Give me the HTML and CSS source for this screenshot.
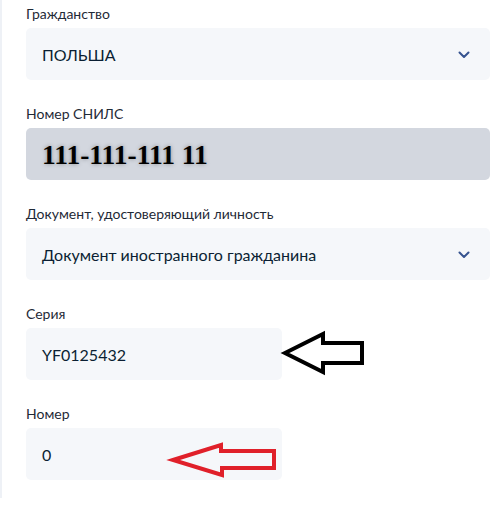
FILE: index.html
```html
<!DOCTYPE html>
<html lang="ru">
<head>
<meta charset="utf-8">
<title>Форма</title>
<link rel="stylesheet" href="styles.css">
</head>
<body>
<div class="page">
  <div class="form">
    <div class="field">
      <div class="label">Гражданство</div>
      <div class="box select">
        <span class="value">ПОЛЬША</span>
        <svg class="chev" width="12" height="8" viewBox="0 0 12 8"><path d="M1.5 1.5 L6 6 L10.5 1.5" fill="none" stroke="#36538f" stroke-width="2" stroke-linecap="round" stroke-linejoin="round"/></svg>
      </div>
    </div>
    <div class="field">
      <div class="label">Номер СНИЛС</div>
      <div class="box snils"><span class="snils-value">111-111-111 11</span></div>
    </div>
    <div class="field">
      <div class="label">Документ, удостоверяющий личность</div>
      <div class="box select">
        <span class="value">Документ иностранного гражданина</span>
        <svg class="chev" width="12" height="8" viewBox="0 0 12 8"><path d="M1.5 1.5 L6 6 L10.5 1.5" fill="none" stroke="#36538f" stroke-width="2" stroke-linecap="round" stroke-linejoin="round"/></svg>
      </div>
    </div>
    <div class="field">
      <div class="label">Серия</div>
      <div class="box short"><span class="value">YF0125432</span></div>
    </div>
    <div class="field">
      <div class="label">Номер</div>
      <div class="box short"><span class="value">0</span></div>
    </div>
  </div>
  <svg class="marks" width="492" height="518" viewBox="0 0 492 518">
    <polygon points="285,353 323,334 323,343 362,343 362,363 323,363 323,372" fill="none" stroke="#000" stroke-width="4" stroke-linejoin="miter"/>
    <polygon points="173,460 221,445 221,451 274,451 274,468 222,468 222,475" fill="none" stroke="#e0202a" stroke-width="4" stroke-linejoin="miter"/>
  </svg>
</div>
</body>
</html>
```

FILE: styles.css
```css
html, body {
  margin: 0;
  padding: 0;
  background: #ffffff;
}
body {
  font-family: Lato, "Noto Sans", sans-serif;
  color: #0b1f33;
}
.page {
  position: relative;
  width: 492px;
  height: 518px;
}
.form {
  box-sizing: border-box;
  width: 492px;
  height: 498px;
  border-left: 2px solid #eef1f6;
  padding: 4px 2px 0 24px;
  display: flex;
  flex-direction: column;
  gap: 24px;
}
.field {
  display: flex;
  flex-direction: column;
  gap: 4px;
}
.label {
  font-size: 14px;
  line-height: 20px;
  color: #1f2a37;
}
.box {
  box-sizing: border-box;
  height: 52px;
  border-radius: 5px;
  background: #f5f7fa;
  display: flex;
  align-items: center;
  padding: 2px 16px 0 16px;
}
.value {
  font-size: 16px;
  line-height: 20px;
  color: #0b1f33;
}
.select {
  justify-content: space-between;
  padding-right: 20px;
}
.chev {
  display: block;
}
.snils {
  background: #d3d7df;
}
.snils-value {
  font-family: "Liberation Serif", "Times New Roman", serif;
  font-weight: bold;
  font-size: 27.5px;
  line-height: 30px;
  color: #000;
  text-shadow: 0 0 4px rgba(0, 0, 0, 0.35);
}
.short {
  width: 256px;
}
.marks {
  position: absolute;
  left: 0;
  top: 0;
  pointer-events: none;
}
```
